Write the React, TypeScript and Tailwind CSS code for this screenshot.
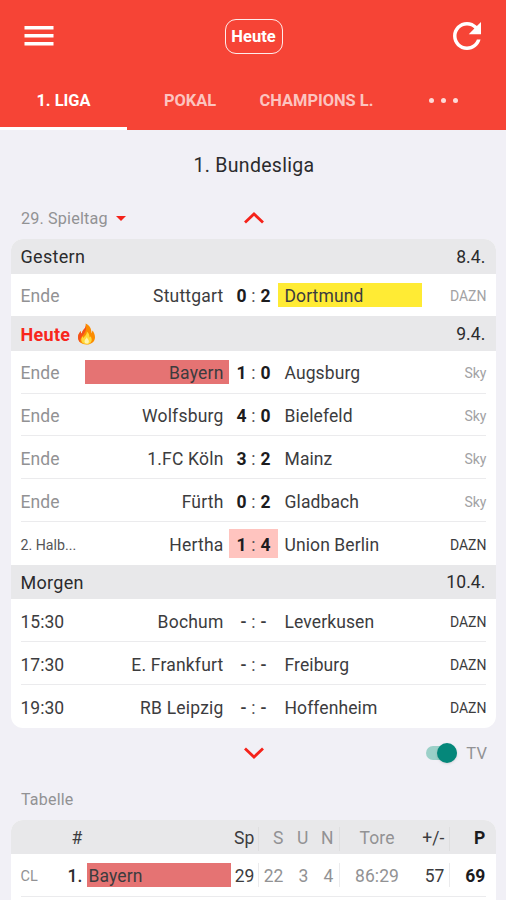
import clsx from "clsx";

type Match = {
    status: string;
    home: string;
    away: string;
    score: [string, string];
    tv: string;
    homeClass?: string;
    awayClass?: string;
    live?: boolean;
};

type Day = { label: string; date: string; today?: boolean; matches: Match[] };

const days: Day[] = [
    {
        label: "Gestern",
        date: "8.4.",
        matches: [{ status: "Ende", home: "Stuttgart", away: "Dortmund", score: ["0", "2"], tv: "DAZN", awayClass: "bg-[#ffeb34]" }],
    },
    {
        label: "Heute",
        date: "9.4.",
        today: true,
        matches: [
            { status: "Ende", home: "Bayern", away: "Augsburg", score: ["1", "0"], tv: "Sky", homeClass: "bg-[#e57373]" },
            { status: "Ende", home: "Wolfsburg", away: "Bielefeld", score: ["4", "0"], tv: "Sky" },
            { status: "Ende", home: "1.FC Köln", away: "Mainz", score: ["3", "2"], tv: "Sky" },
            { status: "Ende", home: "Fürth", away: "Gladbach", score: ["0", "2"], tv: "Sky" },
            { status: "2. Halb...", home: "Hertha", away: "Union Berlin", score: ["1", "4"], tv: "DAZN", live: true },
        ],
    },
    {
        label: "Morgen",
        date: "10.4.",
        matches: [
            { status: "15:30", home: "Bochum", away: "Leverkusen", score: ["-", "-"], tv: "DAZN" },
            { status: "17:30", home: "E. Frankfurt", away: "Freiburg", score: ["-", "-"], tv: "DAZN" },
            { status: "19:30", home: "RB Leipzig", away: "Hoffenheim", score: ["-", "-"], tv: "DAZN" },
        ],
    },
];

function Flame() {
    return (
        <svg viewBox="0 0 18 22" className="mb-px ml-[7px] h-[22px] w-[19px]">
            <path d="M8 .5C9 4 7 5.500 5.200 8 4.600 9 4.300 9.800 4.300 10.800 3.500 10.300 3.300 9.200 3.500 8 1.500 9.800.5 12 .5 14.300.5 18.600 4 21.500 9 21.500s8.500-3 8.500-7.300c0-2.700-1.300-4.700-2.300-6.700-.7 1-.6 2-1.200 2.800C14 6 12.500 2.300 8 .5z" fill="#fb8c00" />
            <path d="M8 .5c1 3.500-1 5-2.800 7.500-.6 1-.9 1.800-.9 2.800-.8-.5-1-1.600-.8-2.800C1.500 9.800.5 12 .5 14.300c0 2.200 1 4.200 2.600 5.500C2 16 4 14 6 11.500 8 9 9.500 6 8 .5z" fill="#f4511e" />
            <path d="M9.300 8.500c.4 2.400-1 3.600-2.300 5-.5.500-.8 1-.9 1.500-.6-.4-.8-1-.8-1.700-1 1-1.500 2.200-1.500 3.500 0 2.700 2.200 4.400 5.200 4.400s5.200-1.800 5.200-4.500c0-1.500-.7-2.500-1.100-3.500-.5.500-.5 1-1 1.400-.1-2.600-.8-4.700-2.800-6.100z" fill="#ffd93b" />
            <path d="M9.300 14c0 1.500-2.300 2.300-2.300 4.500 0 1.300 1 2 2.200 2s2.200-.8 2.200-2.100c0-1.700-1.700-2.300-2.100-4.400z" fill="#fff3b0" />
        </svg>
    );
}

function DayHeader({ day }: { day: Day }) {
    return (
        <div className="flex h-[34.5px] items-center bg-[#e8e8ea] px-2.5 pt-[2px] text-[#2b2b2d]">
            <span className={clsx("text-[18px] tracking-[0.3px]", day.today && "font-bold text-[#f8261c]")}>{day.label}</span>
            {day.today && <Flame />}
            <span className="ml-auto">{day.date}</span>
        </div>
    );
}

function MatchRow({ match, last }: { match: Match; last: boolean }) {
    const over = match.status === "Ende";
    const open = match.score[0] === "-";
    return (
        <div className={clsx("mx-2.5 flex h-[42.83px] items-center border-b pt-[1.500px]", last ? "border-transparent" : "border-[#ebebed]")}>
            <span
                className={clsx(
                    "w-16 shrink-0 pt-[3px]",
                    over ? "text-[#929294]" : "tracking-normal",
                    match.live && "text-[14.200px] text-[#555557]",
                )}
            >
                {match.status}
            </span>
            <span className={clsx("flex h-6 w-36 items-center justify-end pt-[3px] pr-[5px] tracking-[0.2px]", match.homeClass)}>
                {match.home}
            </span>
            <span
                className={clsx(
                    "flex h-[29px] w-[49px] items-center justify-center pt-[3px] pl-px",
                    match.live && "bg-[#ffc4bf]",
                    open ? "font-medium" : "font-bold text-[#1c1c1e]",
                )}
            >
                <span className="w-[11px] text-center">{match.score[0]}</span>
                <span className={clsx("text-center font-normal text-[#555557]", open ? "w-[9px]" : "w-[13px]")}>:</span>
                <span className="w-[11px] text-center">{match.score[1]}</span>
            </span>
            <span className={clsx("flex h-6 w-36 items-center pt-[3px] pl-[7px]", match.awayClass)}>{match.away}</span>
            <span className={clsx("-mr-px ml-auto pt-[2px] text-[14px] tracking-normal", over ? "text-[#a2a2a4]" : "text-[#3c3c3e]")}>
                {match.tv}
            </span>
        </div>
    );
}

export default function App() {
    return (
        <div className="h-[900px] w-[506px] overflow-hidden bg-[#f1f0f6] font-['Roboto',sans-serif] text-[17.5px] leading-none tracking-[0.1px] text-[#3c3c3e]">
            <header className="h-[130px] bg-[#f64436] text-white">
                <div className="flex h-[72px] items-center justify-between pr-[25px] pl-6">
                    <svg viewBox="0 0 30 20" className="h-5 w-[30px]" fill="#fff">
                        <path d="M.5 0h29v3.600H.5zM.5 8h29v3.600H.5zM.5 16h29v3.600H.5z" />
                    </svg>
                    <span className="flex h-[35px] w-[58px] items-center justify-center rounded-[11px] border border-white/90 pt-[2px] text-[16.5px] font-bold tracking-normal">
                        Heute
                    </span>
                    <svg viewBox="4 4 16 16" className="mb-px h-7 w-7" fill="#fff">
                        <path d="M17.650 6.350C16.200 4.900 14.210 4 12 4c-4.420 0-7.990 3.580-7.990 8s3.570 8 7.990 8c3.730 0 6.840-2.550 7.730-6h-2.080c-.820 2.330-3.040 4-5.650 4-3.310 0-6-2.690-6-6s2.690-6 6-6c1.660 0 3.140.690 4.220 1.780L13 11h7V4l-2.350 2.350z" />
                    </svg>
                </div>
                <nav className="flex h-[58px] text-[16.4px] font-bold tracking-normal text-white/70">
                    <span className="flex w-[127px] items-center justify-center border-b-3 border-white pt-[4px] text-white">1. LIGA</span>
                    <span className="flex w-[126px] items-center justify-center pt-px">POKAL</span>
                    <span className="flex w-[127px] items-center justify-center pt-px">CHAMPIONS L.</span>
                    <span className="flex w-[126px] items-center justify-center gap-[7px] pb-0.5">
                        <i className="size-[5px] rounded-full bg-white/80" />
                        <i className="size-[5px] rounded-full bg-white/80" />
                        <i className="size-[5px] rounded-full bg-white/80" />
                    </span>
                </nav>
            </header>

            <h1 className="flex h-[69px] items-center justify-center pt-[2px] pl-0.5 text-[19.500px] tracking-[0.3px] text-[#2b2b2d]">1. Bundesliga</h1>

            <div className="grid h-10 grid-cols-3 items-center px-[21px] text-[#929294]">
                <span className="flex items-center text-[16.200px] tracking-[0.15px]">
                    29. Spieltag
                    <svg viewBox="0 0 10 5" className="ml-[8px] h-[5px] w-[10px]">
                        <path d="M0 0h10L5 5z" fill="#f5221a" />
                    </svg>
                </span>
                <svg viewBox="0 0 20 12" className="mb-0.5 ml-0.5 h-3 w-5 justify-self-center" fill="none" stroke="#f5221a" strokeWidth="2.800">
                    <path d="M1 10.500l9-8.500 9 8.500" />
                </svg>
            </div>

            <section className="mx-[10.500px] overflow-hidden rounded-xl bg-white">
                {days.map((day) => (
                    <div key={day.label}>
                        <DayHeader day={day} />
                        {day.matches.map((match, i) => (
                            <MatchRow key={match.home} match={match} last={i === day.matches.length - 1} />
                        ))}
                    </div>
                ))}
            </section>

            <div className="grid h-[50px] grid-cols-3 items-center px-[21px] text-[#929294]">
                <span />
                <svg viewBox="0 0 20 12" className="ml-0.5 h-3 w-5 justify-self-center" fill="none" stroke="#f5221a" strokeWidth="2.800">
                    <path d="M1 1.500l9 8.500 9-8.500" />
                </svg>
                <span className="-mr-0.5 flex items-center justify-self-end">
                    <span className="mr-[9px] flex h-3.5 w-[31px] items-center justify-end rounded-full bg-[#9bd0c8]">
                        <span className="size-5 rounded-full bg-[#05877a] shadow-sm" />
                    </span>
                    <span className="pt-0.5 text-[16.500px]">TV</span>
                </span>
            </div>

            <h2 className="flex h-[42px] items-center pt-0.5 pl-[21px] text-[16px] tracking-[0.2px] text-[#929294]">Tabelle</h2>

            <section className="mx-[10.500px] overflow-hidden rounded-t-xl bg-white">
                <div className="flex h-[34.5px] items-center bg-[#e8e8ea] px-2.5 pt-[3px] text-[#929294]">
                    <span className="w-[62px] text-right text-[#3c3c3e]">#</span>
                    <span className="w-[172px] text-right text-[#3c3c3e]">Sp</span>
                    <span className="ml-[3px] flex h-6 w-[82px] items-center border-x border-[#dededf]">
                        <span className="w-[25px] text-right">S</span>
                        <span className="w-[25px] text-right">U</span>
                        <span className="w-[25px] text-right">N</span>
                    </span>
                    <span className="w-[75px] text-center">Tore</span>
                    <span className="flex h-6 w-[35px] items-center justify-end border-r border-[#dededf] pr-1 text-[#3c3c3e]">+/-</span>
                    <span className="ml-auto font-bold text-[#1c1c1e]">P</span>
                </div>
                <div className="mx-2.5 flex h-[42.83px] items-center border-b border-[#ebebed] text-[#929294]">
                    <span className="w-[42px] pt-[3px] text-[14.500px]">CL</span>
                    <span className="w-[20px] pt-[2px] text-right font-medium text-[#2b2b2d]">1.</span>
                    <span className="ml-1 flex h-6 w-36 items-center bg-[#e57373] pt-[2px] pl-[2px] text-[#3c3c3e]">Bayern</span>
                    <span className="w-6 pt-[2px] text-right text-[#3c3c3e]">29</span>
                    <span className="ml-[3px] flex h-6 w-[82px] items-center border-x border-[#ebebed] pt-[2px]">
                        <span className="w-[25px] text-right">22</span>
                        <span className="w-[25px] text-right">3</span>
                        <span className="w-[25px] text-right">4</span>
                    </span>
                    <span className="w-[75px] pt-[2px] text-center">86:29</span>
                    <span className="flex h-6 w-[35px] items-center justify-end border-r border-[#ebebed] pt-[2px] pr-1 text-[#3c3c3e]">57</span>
                    <span className="ml-auto pt-[2px] font-bold text-[#1c1c1e]">69</span>
                </div>
                <div className="h-4" />
            </section>
        </div>
    );
}
